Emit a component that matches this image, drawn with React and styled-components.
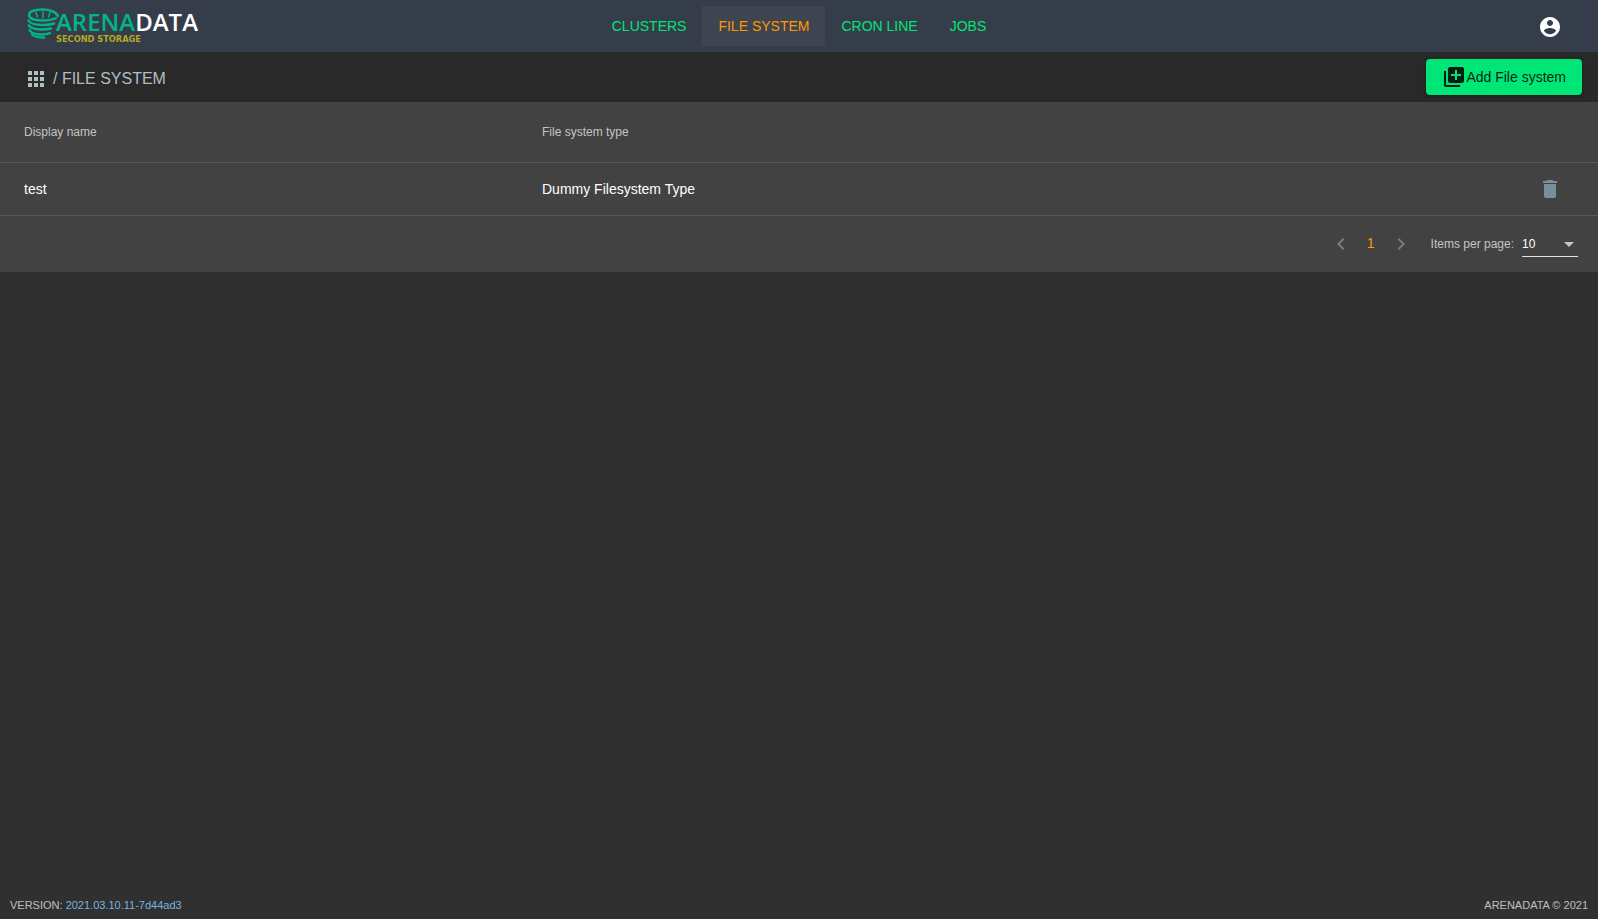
import React from "react";
import styled, { createGlobalStyle } from "styled-components";

const Global = createGlobalStyle`
  html, body { margin: 0; padding: 0; height: 100%; background: #303030; overflow: hidden; }
  body { font-family: "Liberation Sans", Arial, sans-serif; color: #fff; }
  #root { height: 100%; }
`;

const Page = styled.div`
  display: flex;
  flex-direction: column;
  height: 919px;
  background: #303030;
`;

const TopBar = styled.header`
  display: grid;
  grid-template-columns: 1fr auto 1fr;
  align-items: center;
  height: 52px;
  background: #353d4a;
  flex: none;
`;

const LogoLink = styled.a`
  display: flex;
  padding-left: 26px;
`;

const Nav = styled.nav`
  display: flex;
  align-items: center;
`;

const NavItem = styled.a`
  display: flex;
  align-items: center;
  height: 40px;
  padding: 0 16px;
  font-size: 14px;
  color: ${(p) => (p.$active ? "#ff9800" : "#00e676")};
  background: ${(p) => (p.$active ? "#3e4450" : "transparent")};
`;

const UserSlot = styled.div`
  display: flex;
  justify-content: flex-end;
  padding-right: 36px;
  padding-top: 2px;
`;

const SubBar = styled.div`
  display: flex;
  align-items: center;
  justify-content: space-between;
  height: 50px;
  flex: none;
  padding: 0 16px 0 24px;
  background: #292929;
`;

const Crumbs = styled.div`
  display: flex;
  align-items: center;
  gap: 5px;
  font-size: 16px;
  color: #b0bec5;
  padding-top: 4px;
`;

const AddButton = styled.button`
  display: flex;
  align-items: center;
  height: 36px;
  padding: 0 16px;
  border: 0;
  border-radius: 4px;
  background: #00e676;
  color: rgba(0, 0, 0, 0.87);
  font: 400 14px "Liberation Sans", Arial, sans-serif;
  box-shadow: 0 3px 1px -2px rgba(0,0,0,.2), 0 2px 2px 0 rgba(0,0,0,.14), 0 1px 5px 0 rgba(0,0,0,.12);
`;

const Card = styled.section`
  background: #424242;
  flex: none;
`;

const Row = styled.div`
  display: grid;
  grid-template-columns: 518px 1fr 60px;
  align-items: center;
  height: ${(p) => (p.$head ? "60px" : "52px")};
  padding-left: 24px;
  border-bottom: 1px solid rgba(255, 255, 255, 0.12);
  font-size: ${(p) => (p.$head ? "12px" : "14px")};
  color: ${(p) => (p.$head ? "rgba(255,255,255,.7)" : "#fff")};
`;

const IconCell = styled.div`
  display: flex;
  padding-left: 0;
  color: #78909c;
`;

const Paginator = styled.div`
  display: flex;
  align-items: center;
  justify-content: flex-end;
  height: 56px;
  padding-right: 20px;
  font-size: 12px;
  color: rgba(255, 255, 255, 0.7);
`;

const PageArrow = styled.span`
  display: flex;
  color: rgba(255, 255, 255, 0.3);
`;

const PageNum = styled.span`
  width: 36px;
  text-align: center;
  font-size: 14px;
  color: #ff9800;
  margin-top: -2px;
`;

const PerPageLabel = styled.span`
  margin: 0 8px 0 18px;
`;

const PerPage = styled.div`
  display: flex;
  align-items: center;
  justify-content: space-between;
  width: 56px;
  height: 24px;
  margin-top: 1px;
  box-sizing: border-box;
  border-bottom: 1px solid rgba(255, 255, 255, 0.85);
  color: #fff;
  font-size: 12px;
`;

const Caret = styled.span`
  width: 0;
  height: 0;
  margin-right: 4px;
  border-left: 5px solid transparent;
  border-right: 5px solid transparent;
  border-top: 5px solid rgba(255, 255, 255, 0.7);
`;

const Footer = styled.footer`
  display: flex;
  justify-content: space-between;
  margin-top: auto;
  padding: 0 10px 7px;
  font-size: 11px;
  line-height: 13px;
  color: rgba(255, 255, 255, 0.7);
`;

const VersionLink = styled.a`
  color: #7ab3dc;
`;

const Icon = ({ d, size = 24 }) => (
  <svg width={size} height={size} viewBox="0 0 24 24" fill="currentColor" aria-hidden="true">
    <path d={d} />
  </svg>
);

const icons = {
  apps: "M4 8h4V4H4v4zm6 12h4v-4h-4v4zm-6 0h4v-4H4v4zm0-6h4v-4H4v4zm6 0h4v-4h-4v4zm6-10v4h4V4h-4zm-6 4h4V4h-4v4zm6 6h4v-4h-4v4zm0 6h4v-4h-4v4z",
  add: "M4 6H2v14c0 1.1.9 2 2 2h14v-2H4V6zm16-4H8c-1.1 0-2 .9-2 2v12c0 1.1.9 2 2 2h12c1.1 0 2-.9 2-2V4c0-1.1-.9-2-2-2zm-1 9h-4v4h-2v-4H9V9h4V5h2v4h4v2z",
  user: "M12 2C6.48 2 2 6.48 2 12s4.48 10 10 10 10-4.48 10-10S17.52 2 12 2zm0 3c1.66 0 3 1.34 3 3s-1.34 3-3 3-3-1.34-3-3 1.34-3 3-3zm0 14.2c-2.5 0-4.71-1.28-6-3.22.03-1.99 4-3.08 6-3.08 1.99 0 5.97 1.09 6 3.08-1.29 1.94-3.5 3.22-6 3.22z",
  trash: "M6 19c0 1.1.9 2 2 2h8c1.1 0 2-.9 2-2V7H6v12zM19 4h-3.5l-1-1h-5l-1 1H5v2h14V4z",
  prev: "M15.41 7.41 14 6l-6 6 6 6 1.41-1.41L10.83 12z",
  next: "M10 6 8.59 7.41 13.17 12l-4.58 4.59L10 18l6-6z",
};

const Logo = () => (
  <svg width="172" height="46" viewBox="0 0 172 46" aria-label="Arenadata">
    <g fill="none" stroke="#00b48a" strokeWidth="2.4" strokeLinecap="round">
      <path d="M32 13C30 8.5 23 6.5 17 6.5C9 6.5 3 8.5 3 12C3 15.5 9 17.5 17 17.5C22 17.5 27 16.5 30 15" />
      <path d="M3 12V31" strokeWidth="0" />
      <path d="M2.5 17.5C4 20.5 10 22 17 22C21 22 25 21.5 28 20.5" />
      <path d="M2.8 22.5C5 25.5 10 26.5 16 26.5C19 26.5 22 26 25 25.5" />
      <path d="M3.5 27C5 30 10 31.5 16 31.5C19 31.5 22 31 24 30" />
      <path d="M6 31.5C8 33.5 12 34.5 18 34.5" />
      <path d="M10 9.5L11.5 14M17 9V15M24 9.5L22.5 14" strokeWidth="1.4" />
    </g>
    <text x="30" y="28" fontFamily="'Open Sans', sans-serif" fontSize="23" fontWeight="600" textLength="142" lengthAdjust="spacingAndGlyphs">
      <tspan fill="#00b48a">ARENA</tspan><tspan fill="#ffffff">DATA</tspan>
    </text>
    <text x="30" y="39" fontFamily="'DejaVu Sans', sans-serif" fontSize="8" fontWeight="700" fill="#b3a81f" textLength="85" lengthAdjust="spacingAndGlyphs">SECOND STORAGE</text>
  </svg>
);

export default function App() {
  return (
    <Page>
      <Global />
      <TopBar>
        <LogoLink><Logo /></LogoLink>
        <Nav>
          <NavItem>CLUSTERS</NavItem>
          <NavItem $active>FILE SYSTEM</NavItem>
          <NavItem>CRON LINE</NavItem>
          <NavItem>JOBS</NavItem>
        </Nav>
        <UserSlot><Icon d={icons.user} /></UserSlot>
      </TopBar>
      <SubBar>
        <Crumbs>
          <Icon d={icons.apps} />
          <span>/ FILE SYSTEM</span>
        </Crumbs>
        <AddButton>
          <Icon d={icons.add} />
          Add File system
        </AddButton>
      </SubBar>
      <Card>
        <Row $head>
          <span>Display name</span>
          <span>File system type</span>
          <span />
        </Row>
        <Row>
          <span>test</span>
          <span>Dummy Filesystem Type</span>
          <IconCell><Icon d={icons.trash} /></IconCell>
        </Row>
        <Paginator>
          <PageArrow><Icon d={icons.prev} /></PageArrow>
          <PageNum>1</PageNum>
          <PageArrow><Icon d={icons.next} /></PageArrow>
          <PerPageLabel>Items per page:</PerPageLabel>
          <PerPage>10<Caret /></PerPage>
        </Paginator>
      </Card>
      <Footer>
        <span>VERSION: <VersionLink>2021.03.10.11-7d44ad3</VersionLink></span>
        <span>ARENADATA © 2021</span>
      </Footer>
    </Page>
  );
}
